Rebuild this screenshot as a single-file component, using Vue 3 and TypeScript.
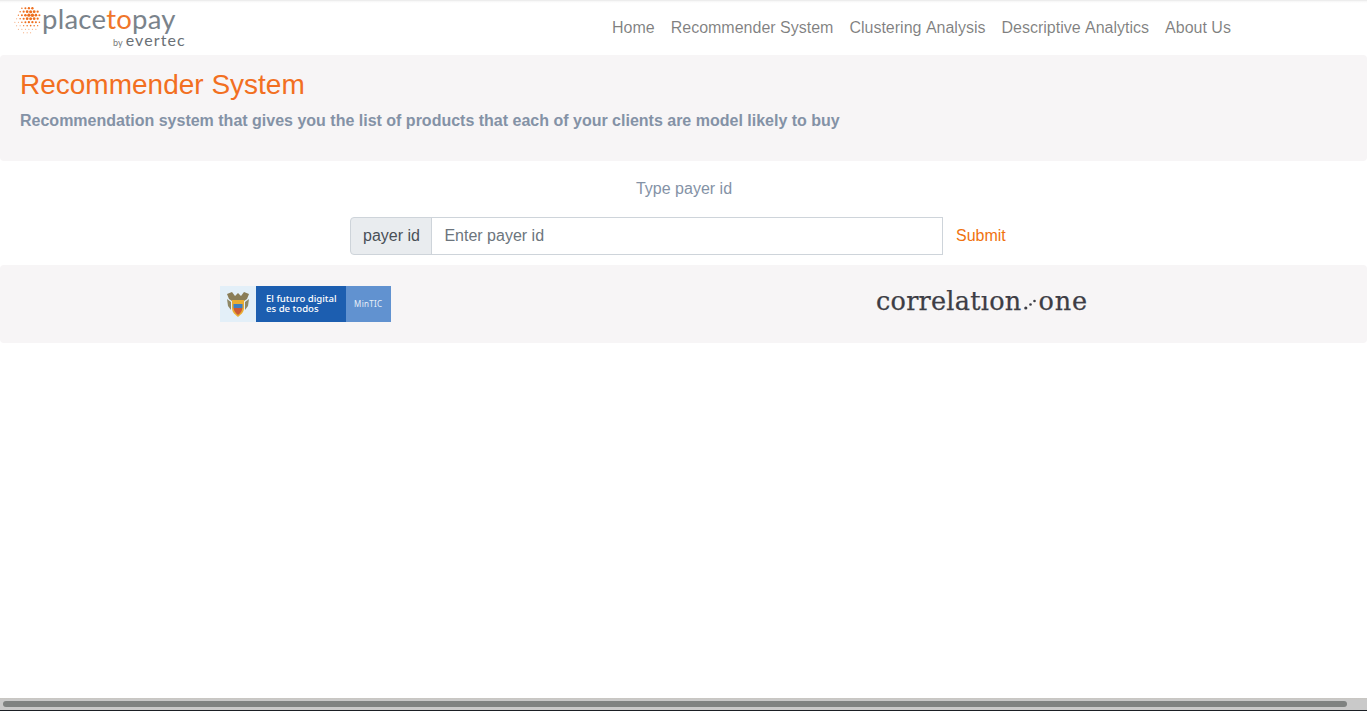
<script setup lang="ts">
const links: string[] = ['Home', 'Recommender System', 'Clustering Analysis', 'Descriptive Analytics', 'About Us']

interface Dot { x: number; y: number; r: number; o: number }
const dots: Dot[] = []
for (let row = 0; row < 8; row++) {
  for (let col = 0; col < 9; col++) {
    const x = 0.9 + col * 3.5 + (row % 2 ? 1.75 : 0)
    const y = 1.2 + row * 3.5
    const d = Math.hypot(x - 13.5, y - 13.5)
    if (d > 13.6) continue
    const toward = Math.hypot(x - 17, y - 8)
    const r = Math.max(0.5, 1.85 - toward * 0.095)
    dots.push({ x, y, r, o: toward > 14 ? 0.75 : 1 })
  }
}
</script>

<template>
  <div class="page">
    <header class="nav">
      <a class="brand" href="#" aria-label="placetopay by evertec">
        <svg class="brand-dots" width="27" height="27" viewBox="0 0 27 27" aria-hidden="true">
          <circle v-for="(d, i) in dots" :key="i" :cx="d.x" :cy="d.y" :r="d.r" :opacity="d.o" fill="#ee6f1e" />
        </svg>
        <span class="brand-text">
          <span class="brand-name">place<span class="brand-to">to</span>pay</span>
          <span class="brand-by"><small>by</small>evertec</span>
        </span>
      </a>
      <nav class="links">
        <a v-for="link in links" :key="link" href="#">{{ link }}</a>
      </nav>
    </header>

    <section class="banner">
      <h1>Recommender System</h1>
      <p>Recommendation system that gives you the list of products that each of your clients are model likely to buy</p>
    </section>

    <main class="form-area">
      <label class="prompt" for="payer">Type payer id</label>
      <div class="form-row">
        <div class="group">
          <span class="addon">payer id</span>
          <input id="payer" type="text" placeholder="Enter payer id" />
        </div>
        <a class="submit" href="#">Submit</a>
      </div>
    </main>

    <footer class="sponsors">
      <div class="sponsor">
        <div class="mintic">
          <div class="shield">
            <svg width="28" height="28" viewBox="0 0 28 28" aria-hidden="true">
              <path d="M3 4 L8 2 L11 6 L14 3 L17 6 L20 2 L25 4 L23 9 L20 11 H8 L5 9 Z" fill="#8a7d57" />
              <path d="M3 9 L7 12 L7 20 L4 16 Z M25 9 L21 12 L21 20 L24 16 Z" fill="#8f8866" />
              <path d="M8 10 H20 V18 C20 23 16 25 14 27 C12 25 8 23 8 18 Z" fill="#e9ad33" />
              <rect x="9.500" y="14" width="9" height="4" fill="#3f7fc2" />
              <path d="M9.500 18 H18.500 C18 21.500 16 23.500 14 25 C12 23.500 10 21.500 9.500 18 Z" fill="#cc5a35" />
            </svg>
          </div>
          <div class="future">El futuro digital<br />es de todos</div>
          <div class="min">MinTIC</div>
        </div>
      </div>
      <div class="sponsor">
        <div class="corr">correlat<span>ı</span>on<svg class="corr-dots" width="12" height="12" viewBox="0 0 12 12" aria-hidden="true"><circle cx="1.800" cy="10" r="1.600" /><circle cx="6.500" cy="6.500" r="1.300" /><circle cx="10.500" cy="3" r="1.300" /></svg><span class="corr-one">one</span></div>
      </div>
    </footer>

    <div class="scrollbar" aria-hidden="true"><div class="thumb"></div></div>
  </div>
</template>

<style>
html, body { margin: 0; overflow: hidden; background: #fff; }
</style>

<style scoped>
.page {
  height: 711px;
  display: flex;
  flex-direction: column;
  font-family: "Liberation Sans", Arial, sans-serif;
  font-size: 16px;
  line-height: 24px;
  color: #495057;
  box-sizing: border-box;
}
.nav {
  height: 55px;
  flex: none;
  display: flex;
  align-items: flex-start;
  box-sizing: border-box;
  padding-left: 14px;
  background: linear-gradient(#e4e4e4 0, #f6f6f6 1px, #fff 3px);
}
.brand {
  display: flex;
  align-items: flex-start;
  text-decoration: none;
  width: 590px;
  flex: none;
  padding-top: 7px;
}
.brand-dots { flex: none; }
.brand-text { display: flex; flex-direction: column; margin-left: 1px; margin-top: -1px; }
.brand-name {
  font-family: Lato, sans-serif;
  font-weight: 400;
  font-size: 27.500px;
  line-height: 26px;
  letter-spacing: 0.25px;
  color: #7a838b;
  white-space: nowrap;
}
.brand-to { color: #f0762a; }
.brand-by {
  align-self: flex-end;
  margin-right: -10px;
  margin-top: 1px;
  font-family: Lato, sans-serif;
  font-size: 16px;
  line-height: 13px;
  letter-spacing: 1.100px;
  color: #6a7076;
  white-space: nowrap;
}
.brand-by small { font-size: 9px; letter-spacing: 0; margin-right: 3px; color: #777; }
.links { display: flex; }
.links a {
  padding: 16px 8px 0;
  color: rgba(0, 0, 0, 0.5);
  text-decoration: none;
  white-space: nowrap;
  font-kerning: none;
}
.banner {
  height: 106px;
  flex: none;
  box-sizing: border-box;
  padding: 13px 20px 0;
  background: #f7f5f6;
  border-radius: 4px;
}
.banner h1 {
  margin: 0;
  font-size: 28px;
  font-weight: 400;
  line-height: 34px;
  color: #f26f21;
}
.banner p {
  margin: 7px 0 0;
  font-weight: 700;
  color: #8492a6;
}
.form-area {
  height: 104px;
  flex: none;
  box-sizing: border-box;
  padding-top: 16px;
  display: flex;
  flex-direction: column;
  align-items: center;
}
.prompt { color: #8492a6; line-height: 24px; margin-left: 1px; }
.form-row {
  display: flex;
  align-items: center;
  margin-top: 16px;
  width: 667px;
}
.group { display: flex; width: 593px; height: 38px; flex: none; }
.addon {
  box-sizing: border-box;
  padding: 6px 11px 6px 12px;
  background: #e9ecef;
  border: 1px solid #ced4da;
  border-radius: 4px 0 0 4px;
  color: #495057;
  white-space: nowrap;
}
input {
  flex: 1;
  min-width: 0;
  box-sizing: border-box;
  margin-left: -1px;
  padding: 6px 12.500px;
  border: 1px solid #ced4da;
  border-radius: 0;
  font: inherit;
  color: #495057;
  background: #fff;
  outline: none;
}
input::placeholder { color: #6c757d; opacity: 1; }
.submit {
  margin-left: 13px;
  color: #f0720f;
  text-decoration: none;
}
.sponsors {
  height: 78px;
  flex: none;
  display: grid;
  grid-template-columns: 609px 1fr;
  background: #f7f5f6;
  border-radius: 4px;
}
.sponsor { display: flex; align-items: flex-start; }
.mintic {
  margin: 21px 0 0 220px;
  width: 171px;
  height: 36px;
  display: flex;
  background: #e3eff8;
}
.shield {
  width: 36px;
  flex: none;
  display: flex;
  align-items: center;
  justify-content: center;
}
.future {
  width: 89.500px;
  flex: none;
  box-sizing: border-box;
  padding: 8px 0 0 10px;
  background: #1c5eb0;
  color: #fff;
  font-family: "Noto Sans", sans-serif;
  font-size: 9.600px;
  font-weight: 500;
  line-height: 10px;
  white-space: nowrap;
}
.min {
  flex: 1;
  background: #6192d0;
  color: #e8f0f8;
  font-family: "Noto Sans", sans-serif;
  font-size: 8px;
  letter-spacing: 0.3px;
  line-height: 36px;
  text-align: center;
}
.corr {
  margin: 21px 0 0 267px;
  font-family: "DejaVu Serif", serif;
  font-size: 25.500px;
  line-height: 30px;
  letter-spacing: 0.25px;
  color: #3d3d45;
  -webkit-text-stroke: 0.25px #3d3d45;
  white-space: nowrap;
}
.corr-dots { fill: #3d3d45; margin: 0 2px 0 3px; stroke: none; }
.corr-one { letter-spacing: 0.9px; }
.scrollbar {
  margin-top: auto;
  height: 13px;
  flex: none;
  box-sizing: border-box;
  padding: 3px 20px 0 3px;
  background: linear-gradient(#c8c6c0 0, #c9c9c9 2px, #c9c9c9 12px, #1b1f24 12px);
}
.thumb {
  height: 6px;
  background: #7f8281;
  border-radius: 3px;
}
</style>
